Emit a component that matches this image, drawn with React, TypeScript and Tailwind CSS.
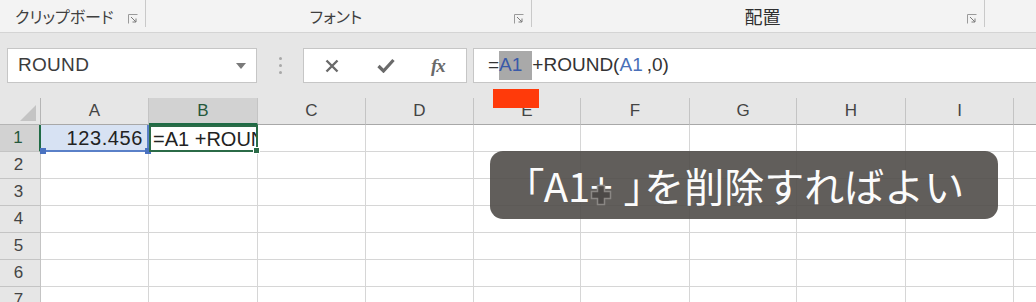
import React from "react";

const cols = [
  { l: "A", w: 108 },
  { l: "B", w: 109 },
  { l: "C", w: 108 },
  { l: "D", w: 108 },
  { l: "E", w: 107 },
  { l: "F", w: 109 },
  { l: "G", w: 107 },
  { l: "H", w: 109 },
  { l: "I", w: 108 },
  { l: "", w: 60 },
];

function Launcher() {
  return (
    <svg width="10" height="10" viewBox="0 0 10 10" className="shrink-0">
      <path d="M0.5 9.5V0.5H9.5" fill="none" stroke="#9a9a9a" strokeWidth="1" />
      <path d="M3 3L8 8M8 4.5V8H4.5" fill="none" stroke="#7a7a7a" strokeWidth="1" />
    </svg>
  );
}

function Cursor() {
  return (
    <svg width="24" height="24" viewBox="0 0 24 24">
      <path
        d="M8.5 2.5H15.5V8.5H21.5V15.5H15.5V21.5H8.5V15.5H2.5V8.5H8.5Z"
        fill="#4c4947"
        stroke="#8a8784"
        strokeWidth="1.5"
      />
    </svg>
  );
}

export default function App() {
  const rows = [1, 2, 3, 4, 5, 6, 7];
  return (
    <div className="relative w-[1036px] h-[302px] overflow-hidden bg-white font-['Liberation_Sans',Arial,sans-serif]">
      {/* Ribbon group labels */}
      <div className="flex h-[33px] bg-[#f3f3f3] border-b border-[#d4d4d4] text-[#3f3f3f] font-['Noto_Sans_CJK_JP',sans-serif] text-[16px] [font-feature-settings:'palt']">
        <div className="flex w-[146px] items-center pl-[15px] pr-[8px] relative">
          <span className="flex-1 leading-none">クリップボード</span>
          <span className="mt-[6px]"><Launcher /></span>
          <div className="absolute right-0 top-0 h-[27px] w-px bg-[#c9c9c9]" />
        </div>
        <div className="flex w-[386px] items-center pr-[8px] relative">
          <span className="flex-1 text-center leading-none pl-[12px]">フォント</span>
          <span className="mt-[6px]"><Launcher /></span>
          <div className="absolute right-0 top-0 h-[27px] w-px bg-[#c9c9c9]" />
        </div>
        <div className="flex w-[453px] items-center pr-[8px] relative">
          <span className="flex-1 text-center leading-none text-[18px] pl-[26px] text-[#2f2f2f]">配置</span>
          <span className="mt-[6px]"><Launcher /></span>
          <div className="absolute right-0 top-0 h-[27px] w-px bg-[#c9c9c9]" />
        </div>
        <div className="flex-1" />
      </div>

      {/* Formula bar */}
      <div className="flex h-[65px] items-start bg-[#e6e6e6] pt-[15px]">
        <div className="ml-[7px] flex h-[35px] w-[250px] items-center border border-[#c6c6c6] bg-white pl-[10px] pr-[10px]">
          <span className="flex-1 text-[19px] text-[#3c3c3c] tracking-[0.3px]">ROUND</span>
          <svg width="10" height="6" viewBox="0 0 10 6">
            <path d="M0 0H10L5 6Z" fill="#7a7a7a" />
          </svg>
        </div>
        <div className="flex w-[46px] h-[35px] flex-col items-center justify-center gap-[4px]">
          <div className="h-[3px] w-[3px] rounded-full bg-[#a8a8a8]" />
          <div className="h-[3px] w-[3px] rounded-full bg-[#a8a8a8]" />
          <div className="h-[3px] w-[3px] rounded-full bg-[#a8a8a8]" />
        </div>
        <div className="flex h-[35px] w-[164px] items-center border border-[#c6c6c6] bg-white pl-[21px]">
          <svg width="14" height="14" viewBox="0 0 14 14">
            <path d="M1.5 1.5L12.5 12.5M12.5 1.5L1.5 12.5" stroke="#6a6a6a" strokeWidth="2.4" />
          </svg>
          <svg width="18" height="15" viewBox="0 0 18 15" className="ml-[38px]">
            <path d="M1.5 8L6.5 13L16.5 2" fill="none" stroke="#6a6a6a" strokeWidth="3.2" />
          </svg>
          <span className="ml-[36px] font-['Liberation_Serif',serif] italic text-[19px] text-[#6a6a6a] font-bold leading-none tracking-[-1px]">fx</span>
        </div>
        <div className="ml-[6px] flex h-[35px] flex-1 items-center border border-r-0 border-[#c6c6c6] bg-white pl-[14px] text-[19px] text-[#333]">
          <span>=</span>
          <span className="bg-[#a9a9a9] pr-[10px] text-[#3a5aa8]">A1</span>
          <span>+ROUND(</span>
          <span className="text-[#4a70b8]">A1</span>
          <span className="pl-[4px]">,0)</span>
        </div>
      </div>

      {/* Grid */}
      <div className="flex h-[27px] text-[17px] text-[#444]">
        <div className="relative w-[41px] shrink-0 border-r border-b border-[#b5b5b5] bg-[#e6e6e6]">
          <svg width="16" height="16" viewBox="0 0 16 16" className="absolute right-[4px] bottom-[3px]">
            <path d="M16 0V16H0Z" fill="#c4c4c4" />
          </svg>
        </div>
        {cols.map((c) => (
          <div
            key={c.l + c.w}
            style={{ width: c.w }}
            className={
              c.l === "B"
                ? "flex shrink-0 items-center justify-center border-r border-[#c4c4c4] border-b-2 border-b-[#1f6b45] bg-[#d2d2d2] text-[#25583b]"
                : "flex shrink-0 items-center justify-center border-r border-b border-[#c4c4c4] border-b-[#a8a8a8] bg-[#e6e6e6]"
            }
          >
            {c.l}
          </div>
        ))}
      </div>
      {rows.map((r) => (
        <div key={r} className="flex h-[27px] text-[17px]">
          <div
            className={
              r === 1
                ? "flex w-[41px] shrink-0 items-center justify-center pr-[3px] border-r-2 border-r-[#1f6b45] border-b border-b-[#c4c4c4] bg-[#d2d2d2] text-[#25583b]"
                : "flex w-[41px] shrink-0 items-center justify-center pr-[3px] border-r border-b border-[#c4c4c4] bg-[#e6e6e6] text-[#444]"
            }
          >
            {r}
          </div>
          {cols.map((c, i) => {
            if (r === 1 && i === 0) {
              return (
                <div
                  key={i}
                  style={{ width: c.w }}
                  className="relative flex shrink-0 items-center justify-end border-r-2 border-b-2 border-[#5a80c8] bg-[#d7e2f3] pr-[4px] text-[20px] text-[#222] tracking-[0.6px]"
                >
                  123.456
                  <div className="absolute left-[-1px] bottom-[-4px] h-[6px] w-[6px] bg-[#4a72c0]" />
                  <div className="absolute right-[-4px] bottom-[-4px] h-[6px] w-[6px] bg-[#4a72c0]" />
                </div>
              );
            }
            if (r === 1 && i === 1) {
              return (
                <div
                  key={i}
                  style={{ width: c.w }}
                  className="relative flex shrink-0 items-center border-2 border-[#2b6b47] bg-white pl-[2px] text-[20px] text-[#222] whitespace-nowrap"
                >
                  <div className="overflow-hidden w-full">=A1 +ROUND(A1,0)</div>
                  <div className="absolute right-[-4px] bottom-[-4px] h-[7px] w-[7px] border border-white bg-[#2b6b47]" />
                </div>
              );
            }
            return (
              <div
                key={i}
                style={{ width: c.w }}
                className="shrink-0 border-r border-b border-[#d6d6d6] bg-white"
              />
            );
          })}
        </div>
      ))}

      {/* Red marker */}
      <div className="absolute left-[493px] top-[89px] h-[19px] w-[46px] bg-[#ff3a0a]" />

      {/* Caption */}
      <div className="absolute left-[490px] top-[151px] flex h-[68px] w-[508px] items-center justify-center rounded-[13px] bg-[#504c49]/90 font-['Noto_Sans_CJK_JP',sans-serif] text-[40px] leading-none text-[#fbfbfb] whitespace-nowrap">
        <span className="[font-feature-settings:'palt']">「</span>
        <span>A1+</span>
        <span className="ml-[12px] [font-feature-settings:'palt']">」</span>
        <span>を削除すればよい</span>
      </div>
      <div className="absolute left-[589px] top-[183px]">
        <Cursor />
      </div>
    </div>
  );
}
